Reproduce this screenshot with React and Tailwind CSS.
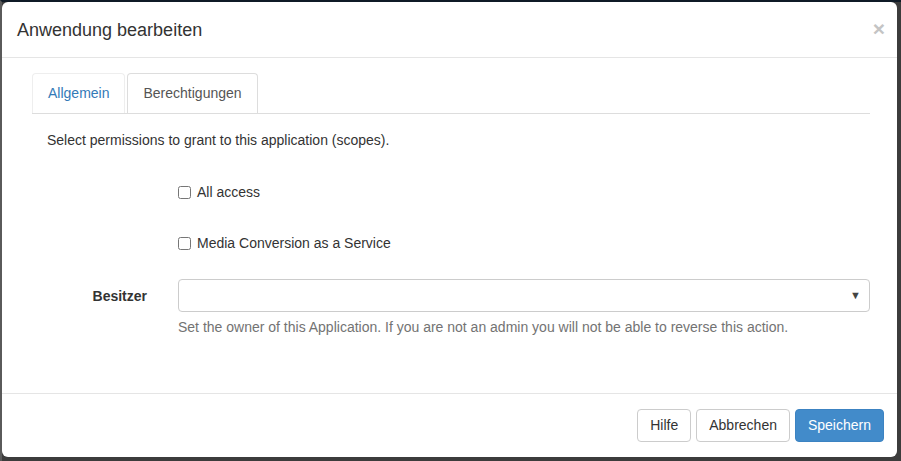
import { useState } from "react";

const Checkbox = ({ label }) => {
  const [checked, setChecked] = useState(false);
  return (
    <label className="flex items-center gap-[6px] text-[14px] text-[#333] cursor-pointer">
      <input
        type="checkbox"
        checked={checked}
        onChange={() => setChecked(!checked)}
        className="w-[13px] h-[13px] m-0 accent-[#428bca]"
      />
      <span>{label}</span>
    </label>
  );
};

const App = () => {
  const [tab, setTab] = useState("perm");

  return (
    <div
      className="w-[901px] h-[461px] overflow-hidden bg-[#3c3c3c] border-t-2 border-l-2 border-t-[#0f1a26] border-l-[#5a5a5a]"
      style={{ fontFamily: '"Liberation Sans", Arial, sans-serif' }}
    >
      <div className="w-[895px] h-[455px] bg-white rounded-[6px] flex flex-col">
        {/* Header */}
        <div className="h-[56px] border-b border-[#e5e5e5] flex items-center justify-between pl-[15px] pr-[12px]">
          <h4 className="text-[18px] text-[#333] leading-none">Anwendung bearbeiten</h4>
          <button
            type="button"
            className="text-[21px] font-bold text-[#c4c4c4] leading-none -mt-[3px]"
          >
            ×
          </button>
        </div>

        {/* Body */}
        <div className="flex-1 pt-[15px] px-[30px] pr-[27px]">
          <div className="flex border-b border-[#ddd] h-[41px]">
            <button
              type="button"
              onClick={() => setTab("general")}
              className={
                tab === "general"
                  ? "h-[41px] px-[15px] text-[14px] text-[#555] bg-white border border-[#ddd] border-b-white rounded-t-[4px] mr-[2px]"
                  : "h-[40px] px-[15px] text-[14px] text-[#337ab7] border border-[#eee] border-b-0 rounded-t-[4px] mr-[2px]"
              }
            >
              Allgemein
            </button>
            <button
              type="button"
              onClick={() => setTab("perm")}
              className={
                tab === "perm"
                  ? "h-[40px] px-[15px] text-[14px] text-[#555] bg-white border border-[#ddd] border-b-0 rounded-t-[4px]"
                  : "h-[40px] px-[15px] text-[14px] text-[#337ab7] border border-[#eee] border-b-0 rounded-t-[4px]"
              }
            >
              Berechtigungen
            </button>
          </div>

          <p className="mt-[16px] ml-[15px] text-[14px] leading-[20px] text-[#333]">
            Select permissions to grant to this application (scopes).
          </p>

          <div className="ml-[146px] mt-[32px] flex flex-col gap-[31px]">
            <div className="h-[20px] flex items-center">
              <Checkbox label="All access" />
            </div>
            <div className="h-[20px] flex items-center">
              <Checkbox label="Media Conversion as a Service" />
            </div>
          </div>

          <div className="flex mt-[26px]">
            <div className="w-[115px] text-right text-[14px] font-bold text-[#333] pt-[7px]">
              Besitzer
            </div>
            <div className="ml-[31px] flex-1">
              <div className="h-[33px] border border-[#ccc] rounded-[4px] flex items-center justify-end pr-[8px]">
                <span className="text-[11px] text-[#444]">▼</span>
              </div>
              <p className="mt-[5px] text-[14px] leading-[20px] text-[#737373]">
                Set the owner of this Application. If you are not an admin you will not be able to reverse this action.
              </p>
            </div>
          </div>
        </div>

        {/* Footer */}
        <div className="border-t border-[#e5e5e5] flex justify-end items-start gap-[5px] pt-[15px] pb-[15px] pr-[13px]">
          <button
            type="button"
            className="h-[33px] px-[12px] text-[14px] text-[#333] bg-white border border-[#ccc] rounded-[4px]"
          >
            Hilfe
          </button>
          <button
            type="button"
            className="h-[33px] px-[12px] text-[14px] text-[#333] bg-white border border-[#ccc] rounded-[4px]"
          >
            Abbrechen
          </button>
          <button
            type="button"
            className="h-[33px] px-[12px] text-[14px] text-white bg-[#428bca] border border-[#3c83c2] rounded-[4px]"
          >
            Speichern
          </button>
        </div>
      </div>
    </div>
  );
};

export default App;
